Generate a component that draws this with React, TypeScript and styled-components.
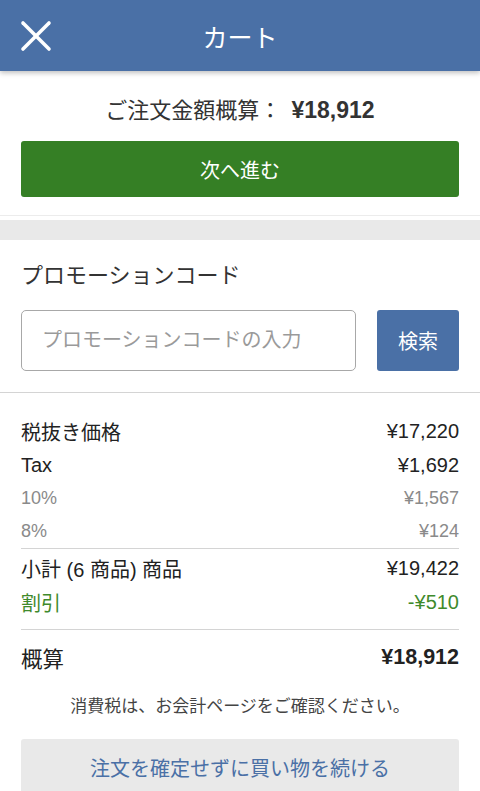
import React, { useState } from 'react';
import styled, { createGlobalStyle } from 'styled-components';

const palette = {
	blue: '#4a70a6',
	green: '#357f25',
	text: '#222222',
	gray: '#8a8a8a',
	line: '#d4d4d4',
	band: '#e9e9e9',
	discount: '#3f8a2c',
};

const GlobalStyle = createGlobalStyle`
	* { box-sizing: border-box; }
	body {
		margin: 0;
		background: #ffffff;
		font-family: "Liberation Sans", "Noto Sans CJK JP", sans-serif;
		color: ${palette.text};
	}
`;

const Page = styled.div`
	width: 480px;
	min-height: 791px;
	overflow: hidden;
`;

const Header = styled.header`
	position: relative;
	z-index: 1;
	height: 71px;
	display: flex;
	align-items: center;
	justify-content: center;
	background-color: ${palette.blue};
	box-shadow: 0 2px 5px rgba(0, 0, 0, 0.25);
	color: white;
	font-size: 25px;

	.header-close {
		position: absolute;
		left: 20px;
		top: 20px;
		width: 32px;
		height: 32px;
	}
`;

const Summary = styled.section`
	padding: 24px 21px 18px;
	border-bottom: 1px solid #ececec;

	.summary-total {
		margin: 0 0 15px;
		text-align: center;
		font-size: 22px;
		line-height: 30px;
		color: #333;
		b {
			font-size: 23px;
			font-weight: 700;
			margin-left: 4px;
		}
	}
`;

const Button = styled.button<{ variant: 'primary' | 'search' | 'ghost' }>`
	display: flex;
	align-items: center;
	justify-content: center;
	border: 0;
	border-radius: 3px;
	font-family: inherit;
	cursor: pointer;
	width: ${(p) => (p.variant === 'search' ? '82px' : '100%')};
	height: ${(p) => (p.variant === 'search' ? '61px' : '56px')};
	flex-shrink: 0;
	font-size: 20px;
	color: ${(p) => (p.variant === 'ghost' ? palette.blue : 'white')};
	background-color: ${(p) =>
		p.variant === 'primary' ? palette.green : p.variant === 'search' ? palette.blue : palette.band};
`;

const Band = styled.div`
	margin-top: 4px;
	height: 20px;
	background-color: ${palette.band};
`;

const Promo = styled.section`
	padding: 21px 21px 21px;
	border-bottom: 1px solid ${palette.line};

	.promo-title {
		margin: 0 0 19px;
		font-size: 22px;
		line-height: 30px;
		color: #333;
	}
	.promo-row {
		display: flex;
		gap: 21px;
	}
	input {
		flex: 1;
		min-width: 0;
		height: 61px;
		padding: 0 20px;
		border: 1px solid #a8a8a8;
		border-radius: 5px;
		font-family: inherit;
		font-size: 20px;
		outline: none;
		&::placeholder {
			color: #9a9a9a;
		}
	}
`;

const Breakdown = styled.section`
	padding: 21px 21px 0;
`;

const Group = styled.div<{ divided?: boolean; top?: number; bottom?: number }>`
	padding-top: ${(p) => p.top ?? 0}px;
	padding-bottom: ${(p) => p.bottom ?? 0}px;
	border-bottom: ${(p) => (p.divided ? `1px solid ${palette.line}` : '0')};
`;

const Row = styled.div<{ tone?: 'main' | 'sub' | 'discount' | 'total' }>`
	display: flex;
	justify-content: space-between;
	align-items: center;
	height: ${(p) => (p.tone === 'sub' ? '33px' : p.tone === 'total' ? '40px' : '34px')};
	font-size: ${(p) => (p.tone === 'sub' ? '18px' : p.tone === 'total' ? '21.5px' : '20px')};
	color: ${(p) =>
		p.tone === 'sub' ? palette.gray : p.tone === 'discount' ? palette.discount : palette.text};
	b {
		font-weight: 700;
	}
`;

const Note = styled.p`
	margin: 18px 0 20px;
	line-height: 24px;
	text-align: center;
	font-size: 17px;
	color: #444;
`;

const CloseIcon = () => (
	<svg className='header-close' viewBox='0 0 32 32' fill='none' stroke='white' strokeWidth='3.6' strokeLinecap='round'>
		<line x1='3' y1='3' x2='29' y2='29' />
		<line x1='29' y1='3' x2='3' y2='29' />
	</svg>
);

const App: React.FC = () => {
	const [code, setCode] = useState('');

	return (
		<Page>
			<GlobalStyle />
			<Header>
				<CloseIcon />
				カート
			</Header>
			<Summary>
				<p className='summary-total'>
					ご注文金額概算： <b>¥18,912</b>
				</p>
				<Button variant='primary'>次へ進む</Button>
			</Summary>
			<Band />
			<Promo>
				<p className='promo-title'>プロモーションコード</p>
				<div className='promo-row'>
					<input
						value={code}
						onChange={(e) => setCode(e.target.value)}
						placeholder='プロモーションコードの入力'
					/>
					<Button variant='search'>検索</Button>
				</div>
			</Promo>
			<Breakdown>
				<Group divided>
					<Row tone='main'>
						<span>税抜き価格</span>
						<span>¥17,220</span>
					</Row>
					<Row tone='main'>
						<span>Tax</span>
						<span>¥1,692</span>
					</Row>
					<Row tone='sub'>
						<span>10%</span>
						<span>¥1,567</span>
					</Row>
					<Row tone='sub'>
						<span>8%</span>
						<span>¥124</span>
					</Row>
				</Group>
				<Group divided top={2} bottom={10}>
					<Row tone='main'>
						<span>小計 (6 商品) 商品</span>
						<span>¥19,422</span>
					</Row>
					<Row tone='discount'>
						<span>割引</span>
						<span>-¥510</span>
					</Row>
				</Group>
				<Group top={7}>
					<Row tone='total'>
						<span>概算</span>
						<b>¥18,912</b>
					</Row>
				</Group>
				<Note>消費税は、お会計ページをご確認ください。</Note>
				<Button variant='ghost'>注文を確定せずに買い物を続ける</Button>
			</Breakdown>
		</Page>
	);
};

export default App;
